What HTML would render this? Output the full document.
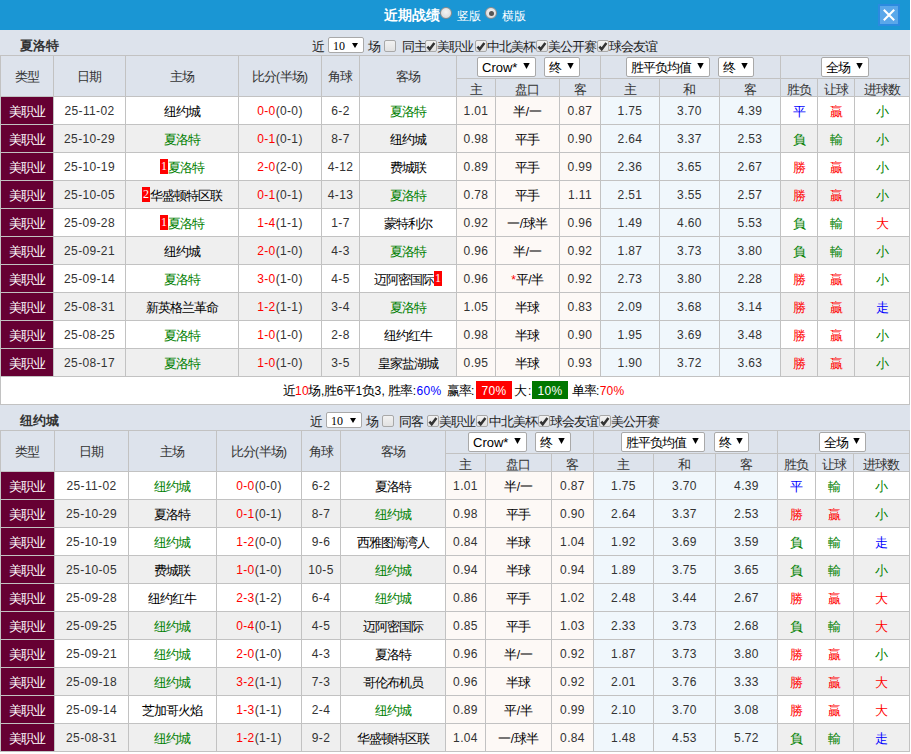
<!DOCTYPE html>
<html><head><meta charset="utf-8">
<style>
html,body{margin:0;padding:0;}
body{width:911px;height:754px;overflow:hidden;position:relative;background:#fff;font-family:"Liberation Sans",sans-serif;font-size:12px;color:#000;}
.c{font-size:13px;letter-spacing:-1px;position:relative;left:-0.5px;}
.tt .c,.hd .c{font-size:inherit;letter-spacing:0;}
.h{color:#333;}
div{position:absolute;box-sizing:border-box;}
.t{text-align:center;white-space:nowrap;color:#333;}
.r{letter-spacing:0.35px;}
.tt{font-weight:bold;font-size:13px;color:#333;line-height:15px;}
.ft{font-size:12px;line-height:16px;color:#222;white-space:nowrap;}
.cb{width:12px;height:12px;border:1px solid #a8a8a8;border-radius:2px;background:linear-gradient(#f2f2f2,#e2e2e2);}
.cb svg{position:absolute;left:0;top:0;}
.sel{background:#fff;border:1px solid #a9a9a9;border-radius:2px;font-size:13px;line-height:17px;}
.sel .sl{position:absolute;left:4px;top:1px;}
.sel .tri{position:absolute;right:5px;top:5px;}
.sel.sm{font-size:12px;line-height:13px;font-family:"Liberation Serif",serif;}
.sel.sm .sl{top:2px;left:4px;}
.sel.sm .tri{top:5px;right:5px;}
.bd{display:inline-block;background:#f00;color:#fff;width:8px;line-height:15px;text-align:center;font-size:12px;position:relative;top:-2px;font-family:"Liberation Serif",serif;letter-spacing:0;}
.bx{color:#fff;text-align:center;height:18px;line-height:20px;font-size:12px;letter-spacing:0.3px;}
.sm1{white-space:nowrap;line-height:18px;font-size:12px;}
#hd{left:0;top:0;width:910px;height:30px;background:#1a96d4;}
</style></head><body>
<div id="hd"></div>
<div class="hd" style="left:384px;top:6px;font-size:14px;font-weight:bold;color:#fff;line-height:18px;">近期战绩</div>
<div style="left:440px;top:7px;width:12px;height:12px;border-radius:50%;background:radial-gradient(circle at 50% 40%,#f4f4f4,#d4d4d4);border:1px solid #8c8c8c;"></div>
<div style="left:457px;top:8px;font-size:12px;color:#fff;line-height:16px;">竖版</div>
<div style="left:485px;top:7px;width:12px;height:12px;border-radius:50%;background:radial-gradient(circle at 50% 40%,#f4f4f4,#d4d4d4);border:1px solid #8c8c8c;"><div style="left:2.5px;top:2.5px;width:5px;height:5px;border-radius:50%;background:#555"></div></div>
<div style="left:502px;top:8px;font-size:12px;color:#fff;line-height:16px;">横版</div>
<div style="left:878px;top:4px;width:22px;height:22px;background:#2b8ae0;"></div>
<div style="left:880px;top:6px;width:18px;height:18px;background:#5aa7ea;"><svg width="18" height="18" viewBox="0 0 18 18"><path d="M3.8 3.8 L14.2 14.2 M14.2 3.8 L3.8 14.2" stroke="#fff" stroke-width="2.1"/></svg></div>
<div style="left:0px;top:30px;width:910px;height:25px;background:#dde3ec;"></div>
<div class="tt" style="left:20px;top:38px"><span class="c">夏洛特</span></div>
<div class="ft" style="left:312px;top:39px"><span class="c">近</span></div><div class="sel sm" style="left:328px;top:37px;width:36px;height:16px"><span class="sl">10</span><svg class="tri" width="6" height="5" viewBox="0 0 6 5"><path d="M0 0H6L3 5Z" fill="#000"/></svg></div><div class="ft" style="left:368px;top:39px"><span class="c">场</span></div><div class="cb" style="left:384px;top:40px"></div><div class="ft" style="left:402px;top:39px"><span class="c">同主</span></div><div class="cb" style="left:425px;top:40px"><svg width="11" height="11" viewBox="0 0 11 11"><path d="M1.4 5.6 L3.7 8.3 L8.4 1.9" stroke="#333" stroke-width="2.5" fill="none"/></svg></div><div class="ft" style="left:437px;top:39px"><span class="c">美职业</span></div><div class="cb" style="left:475px;top:40px"><svg width="11" height="11" viewBox="0 0 11 11"><path d="M1.4 5.6 L3.7 8.3 L8.4 1.9" stroke="#333" stroke-width="2.5" fill="none"/></svg></div><div class="ft" style="left:487px;top:39px"><span class="c">中北美杯</span></div><div class="cb" style="left:536px;top:40px"><svg width="11" height="11" viewBox="0 0 11 11"><path d="M1.4 5.6 L3.7 8.3 L8.4 1.9" stroke="#333" stroke-width="2.5" fill="none"/></svg></div><div class="ft" style="left:548px;top:39px"><span class="c">美公开赛</span></div><div class="cb" style="left:597px;top:40px"><svg width="11" height="11" viewBox="0 0 11 11"><path d="M1.4 5.6 L3.7 8.3 L8.4 1.9" stroke="#333" stroke-width="2.5" fill="none"/></svg></div><div class="ft" style="left:609px;top:39px"><span class="c">球会友谊</span></div>
<div style="left:0px;top:55px;width:910px;height:41px;background:#dde3ec;"></div>
<div style="left:1px;top:97px;width:908px;height:27px;background:#ffffff;"></div>
<div style="left:1px;top:97px;width:52px;height:27px;background:#660033;"></div>
<div style="left:457px;top:97px;width:38px;height:27px;background:#fdf9f6;"></div>
<div style="left:496px;top:97px;width:63px;height:27px;background:#fdf9f6;"></div>
<div style="left:560px;top:97px;width:40px;height:27px;background:#fdf9f6;"></div>
<div style="left:601px;top:97px;width:58px;height:27px;background:#f0f7fc;"></div>
<div style="left:660px;top:97px;width:59px;height:27px;background:#f0f7fc;"></div>
<div style="left:720px;top:97px;width:60px;height:27px;background:#f0f7fc;"></div>
<div style="left:1px;top:125px;width:908px;height:27px;background:#efefef;"></div>
<div style="left:1px;top:125px;width:52px;height:27px;background:#660033;"></div>
<div style="left:457px;top:125px;width:38px;height:27px;background:#fdf9f6;"></div>
<div style="left:496px;top:125px;width:63px;height:27px;background:#fdf9f6;"></div>
<div style="left:560px;top:125px;width:40px;height:27px;background:#fdf9f6;"></div>
<div style="left:601px;top:125px;width:58px;height:27px;background:#f0f7fc;"></div>
<div style="left:660px;top:125px;width:59px;height:27px;background:#f0f7fc;"></div>
<div style="left:720px;top:125px;width:60px;height:27px;background:#f0f7fc;"></div>
<div style="left:1px;top:153px;width:908px;height:27px;background:#ffffff;"></div>
<div style="left:1px;top:153px;width:52px;height:27px;background:#660033;"></div>
<div style="left:457px;top:153px;width:38px;height:27px;background:#fdf9f6;"></div>
<div style="left:496px;top:153px;width:63px;height:27px;background:#fdf9f6;"></div>
<div style="left:560px;top:153px;width:40px;height:27px;background:#fdf9f6;"></div>
<div style="left:601px;top:153px;width:58px;height:27px;background:#f0f7fc;"></div>
<div style="left:660px;top:153px;width:59px;height:27px;background:#f0f7fc;"></div>
<div style="left:720px;top:153px;width:60px;height:27px;background:#f0f7fc;"></div>
<div style="left:1px;top:181px;width:908px;height:27px;background:#efefef;"></div>
<div style="left:1px;top:181px;width:52px;height:27px;background:#660033;"></div>
<div style="left:457px;top:181px;width:38px;height:27px;background:#fdf9f6;"></div>
<div style="left:496px;top:181px;width:63px;height:27px;background:#fdf9f6;"></div>
<div style="left:560px;top:181px;width:40px;height:27px;background:#fdf9f6;"></div>
<div style="left:601px;top:181px;width:58px;height:27px;background:#f0f7fc;"></div>
<div style="left:660px;top:181px;width:59px;height:27px;background:#f0f7fc;"></div>
<div style="left:720px;top:181px;width:60px;height:27px;background:#f0f7fc;"></div>
<div style="left:1px;top:209px;width:908px;height:27px;background:#ffffff;"></div>
<div style="left:1px;top:209px;width:52px;height:27px;background:#660033;"></div>
<div style="left:457px;top:209px;width:38px;height:27px;background:#fdf9f6;"></div>
<div style="left:496px;top:209px;width:63px;height:27px;background:#fdf9f6;"></div>
<div style="left:560px;top:209px;width:40px;height:27px;background:#fdf9f6;"></div>
<div style="left:601px;top:209px;width:58px;height:27px;background:#f0f7fc;"></div>
<div style="left:660px;top:209px;width:59px;height:27px;background:#f0f7fc;"></div>
<div style="left:720px;top:209px;width:60px;height:27px;background:#f0f7fc;"></div>
<div style="left:1px;top:237px;width:908px;height:27px;background:#efefef;"></div>
<div style="left:1px;top:237px;width:52px;height:27px;background:#660033;"></div>
<div style="left:457px;top:237px;width:38px;height:27px;background:#fdf9f6;"></div>
<div style="left:496px;top:237px;width:63px;height:27px;background:#fdf9f6;"></div>
<div style="left:560px;top:237px;width:40px;height:27px;background:#fdf9f6;"></div>
<div style="left:601px;top:237px;width:58px;height:27px;background:#f0f7fc;"></div>
<div style="left:660px;top:237px;width:59px;height:27px;background:#f0f7fc;"></div>
<div style="left:720px;top:237px;width:60px;height:27px;background:#f0f7fc;"></div>
<div style="left:1px;top:265px;width:908px;height:27px;background:#ffffff;"></div>
<div style="left:1px;top:265px;width:52px;height:27px;background:#660033;"></div>
<div style="left:457px;top:265px;width:38px;height:27px;background:#fdf9f6;"></div>
<div style="left:496px;top:265px;width:63px;height:27px;background:#fdf9f6;"></div>
<div style="left:560px;top:265px;width:40px;height:27px;background:#fdf9f6;"></div>
<div style="left:601px;top:265px;width:58px;height:27px;background:#f0f7fc;"></div>
<div style="left:660px;top:265px;width:59px;height:27px;background:#f0f7fc;"></div>
<div style="left:720px;top:265px;width:60px;height:27px;background:#f0f7fc;"></div>
<div style="left:1px;top:293px;width:908px;height:27px;background:#efefef;"></div>
<div style="left:1px;top:293px;width:52px;height:27px;background:#660033;"></div>
<div style="left:457px;top:293px;width:38px;height:27px;background:#fdf9f6;"></div>
<div style="left:496px;top:293px;width:63px;height:27px;background:#fdf9f6;"></div>
<div style="left:560px;top:293px;width:40px;height:27px;background:#fdf9f6;"></div>
<div style="left:601px;top:293px;width:58px;height:27px;background:#f0f7fc;"></div>
<div style="left:660px;top:293px;width:59px;height:27px;background:#f0f7fc;"></div>
<div style="left:720px;top:293px;width:60px;height:27px;background:#f0f7fc;"></div>
<div style="left:1px;top:321px;width:908px;height:27px;background:#ffffff;"></div>
<div style="left:1px;top:321px;width:52px;height:27px;background:#660033;"></div>
<div style="left:457px;top:321px;width:38px;height:27px;background:#fdf9f6;"></div>
<div style="left:496px;top:321px;width:63px;height:27px;background:#fdf9f6;"></div>
<div style="left:560px;top:321px;width:40px;height:27px;background:#fdf9f6;"></div>
<div style="left:601px;top:321px;width:58px;height:27px;background:#f0f7fc;"></div>
<div style="left:660px;top:321px;width:59px;height:27px;background:#f0f7fc;"></div>
<div style="left:720px;top:321px;width:60px;height:27px;background:#f0f7fc;"></div>
<div style="left:1px;top:349px;width:908px;height:27px;background:#efefef;"></div>
<div style="left:1px;top:349px;width:52px;height:27px;background:#660033;"></div>
<div style="left:457px;top:349px;width:38px;height:27px;background:#fdf9f6;"></div>
<div style="left:496px;top:349px;width:63px;height:27px;background:#fdf9f6;"></div>
<div style="left:560px;top:349px;width:40px;height:27px;background:#fdf9f6;"></div>
<div style="left:601px;top:349px;width:58px;height:27px;background:#f0f7fc;"></div>
<div style="left:660px;top:349px;width:59px;height:27px;background:#f0f7fc;"></div>
<div style="left:720px;top:349px;width:60px;height:27px;background:#f0f7fc;"></div>
<div style="left:0px;top:55px;width:910px;height:1px;background:#c2c2c2;"></div>
<div style="left:456px;top:78px;width:453px;height:1px;background:#c2c2c2;"></div>
<div style="left:0px;top:96px;width:910px;height:1px;background:#c2c2c2;"></div>
<div style="left:0px;top:124px;width:910px;height:1px;background:#c2c2c2;"></div>
<div style="left:0px;top:152px;width:910px;height:1px;background:#c2c2c2;"></div>
<div style="left:0px;top:180px;width:910px;height:1px;background:#c2c2c2;"></div>
<div style="left:0px;top:208px;width:910px;height:1px;background:#c2c2c2;"></div>
<div style="left:0px;top:236px;width:910px;height:1px;background:#c2c2c2;"></div>
<div style="left:0px;top:264px;width:910px;height:1px;background:#c2c2c2;"></div>
<div style="left:0px;top:292px;width:910px;height:1px;background:#c2c2c2;"></div>
<div style="left:0px;top:320px;width:910px;height:1px;background:#c2c2c2;"></div>
<div style="left:0px;top:348px;width:910px;height:1px;background:#c2c2c2;"></div>
<div style="left:0px;top:376px;width:910px;height:1px;background:#c2c2c2;"></div>
<div style="left:0px;top:55px;width:1px;height:321px;background:#c2c2c2;"></div>
<div style="left:53px;top:55px;width:1px;height:321px;background:#c2c2c2;"></div>
<div style="left:125px;top:55px;width:1px;height:321px;background:#c2c2c2;"></div>
<div style="left:238px;top:55px;width:1px;height:321px;background:#c2c2c2;"></div>
<div style="left:321px;top:55px;width:1px;height:321px;background:#c2c2c2;"></div>
<div style="left:359px;top:55px;width:1px;height:321px;background:#c2c2c2;"></div>
<div style="left:456px;top:55px;width:1px;height:321px;background:#c2c2c2;"></div>
<div style="left:495px;top:78px;width:1px;height:298px;background:#c2c2c2;"></div>
<div style="left:559px;top:78px;width:1px;height:298px;background:#c2c2c2;"></div>
<div style="left:600px;top:55px;width:1px;height:321px;background:#c2c2c2;"></div>
<div style="left:659px;top:78px;width:1px;height:298px;background:#c2c2c2;"></div>
<div style="left:719px;top:78px;width:1px;height:298px;background:#c2c2c2;"></div>
<div style="left:780px;top:55px;width:1px;height:321px;background:#c2c2c2;"></div>
<div style="left:817px;top:78px;width:1px;height:298px;background:#c2c2c2;"></div>
<div style="left:854px;top:78px;width:1px;height:298px;background:#c2c2c2;"></div>
<div style="left:909px;top:55px;width:1px;height:321px;background:#c2c2c2;"></div>
<div class="t h" style="left:1px;top:57px;width:52px;height:40px;line-height:40px;"><span class="c">类型</span></div>
<div class="t h" style="left:54px;top:57px;width:71px;height:40px;line-height:40px;"><span class="c">日期</span></div>
<div class="t h" style="left:126px;top:57px;width:112px;height:40px;line-height:40px;"><span class="c">主场</span></div>
<div class="t h" style="left:239px;top:57px;width:82px;height:40px;line-height:40px;"><span class="c">比分</span>(<span class="c">半场</span>)</div>
<div class="t h" style="left:322px;top:57px;width:37px;height:40px;line-height:40px;"><span class="c">角球</span></div>
<div class="t h" style="left:360px;top:57px;width:96px;height:40px;line-height:40px;"><span class="c">客场</span></div>
<div class="t h" style="left:457px;top:81px;width:38px;height:17px;line-height:17px;"><span class="c">主</span></div>
<div class="t h" style="left:496px;top:81px;width:63px;height:17px;line-height:17px;"><span class="c">盘口</span></div>
<div class="t h" style="left:560px;top:81px;width:40px;height:17px;line-height:17px;"><span class="c">客</span></div>
<div class="t h" style="left:601px;top:81px;width:58px;height:17px;line-height:17px;"><span class="c">主</span></div>
<div class="t h" style="left:660px;top:81px;width:59px;height:17px;line-height:17px;"><span class="c">和</span></div>
<div class="t h" style="left:720px;top:81px;width:60px;height:17px;line-height:17px;"><span class="c">客</span></div>
<div class="t h" style="left:781px;top:81px;width:36px;height:17px;line-height:17px;"><span class="c">胜负</span></div>
<div class="t h" style="left:818px;top:81px;width:36px;height:17px;line-height:17px;"><span class="c">让球</span></div>
<div class="t h" style="left:855px;top:81px;width:54px;height:17px;line-height:17px;"><span class="c">进球数</span></div>
<div class="sel" style="left:477px;top:57px;width:59px;height:20px;"><span class="sl">Crow*</span><svg class="tri" width="7" height="6" viewBox="0 0 7 6"><path d="M0.3 0H6.7L3.5 6Z" fill="#000"/></svg></div>
<div class="sel" style="left:544px;top:57px;width:36px;height:20px;"><span class="sl"><span class="c">终</span></span><svg class="tri" width="7" height="6" viewBox="0 0 7 6"><path d="M0.3 0H6.7L3.5 6Z" fill="#000"/></svg></div>
<div class="sel" style="left:626px;top:57px;width:84px;height:20px;"><span class="sl"><span class="c">胜平负均值</span></span><svg class="tri" width="7" height="6" viewBox="0 0 7 6"><path d="M0.3 0H6.7L3.5 6Z" fill="#000"/></svg></div>
<div class="sel" style="left:718px;top:57px;width:36px;height:20px;"><span class="sl"><span class="c">终</span></span><svg class="tri" width="7" height="6" viewBox="0 0 7 6"><path d="M0.3 0H6.7L3.5 6Z" fill="#000"/></svg></div>
<div class="sel" style="left:821px;top:57px;width:48px;height:20px;"><span class="sl"><span class="c">全场</span></span><svg class="tri" width="7" height="6" viewBox="0 0 7 6"><path d="M0.3 0H6.7L3.5 6Z" fill="#000"/></svg></div>
<div class="t r" style="left:1px;top:98px;width:52px;height:27px;line-height:27px;color:#fff;"><span class="c">美职业</span></div>
<div class="t r" style="left:54px;top:98px;width:71px;height:27px;line-height:27px;">25-11-02</div>
<div class="t r" style="left:126px;top:98px;width:112px;height:27px;line-height:27px;"><span style="color:#000;"><span class="c">纽约城</span></span></div>
<div class="t r" style="left:239px;top:98px;width:82px;height:27px;line-height:27px;"><span style="color:#ff0000">0-0</span>(0-0)</div>
<div class="t r" style="left:322px;top:98px;width:37px;height:27px;line-height:27px;">6-2</div>
<div class="t r" style="left:360px;top:98px;width:96px;height:27px;line-height:27px;"><span style="color:#008000;"><span class="c">夏洛特</span></span></div>
<div class="t r" style="left:457px;top:98px;width:38px;height:27px;line-height:27px;">1.01</div>
<div class="t r" style="left:496px;top:98px;width:63px;height:27px;line-height:27px;"><span style="color:#000"><span class="c">半</span>/<span class="c">一</span></span></div>
<div class="t r" style="left:560px;top:98px;width:40px;height:27px;line-height:27px;">0.87</div>
<div class="t r" style="left:601px;top:98px;width:58px;height:27px;line-height:27px;">1.75</div>
<div class="t r" style="left:660px;top:98px;width:59px;height:27px;line-height:27px;">3.70</div>
<div class="t r" style="left:720px;top:98px;width:60px;height:27px;line-height:27px;">4.39</div>
<div class="t r" style="left:781px;top:98px;width:36px;height:27px;line-height:27px;"><span style="color:#0000ff"><span class="c">平</span></span></div>
<div class="t r" style="left:818px;top:98px;width:36px;height:27px;line-height:27px;"><span style="color:#ff0000"><span class="c">贏</span></span></div>
<div class="t r" style="left:855px;top:98px;width:54px;height:27px;line-height:27px;"><span style="color:#008000"><span class="c">小</span></span></div>
<div class="t r" style="left:1px;top:126px;width:52px;height:27px;line-height:27px;color:#fff;"><span class="c">美职业</span></div>
<div class="t r" style="left:54px;top:126px;width:71px;height:27px;line-height:27px;">25-10-29</div>
<div class="t r" style="left:126px;top:126px;width:112px;height:27px;line-height:27px;"><span style="color:#008000;"><span class="c">夏洛特</span></span></div>
<div class="t r" style="left:239px;top:126px;width:82px;height:27px;line-height:27px;"><span style="color:#ff0000">0-1</span>(0-1)</div>
<div class="t r" style="left:322px;top:126px;width:37px;height:27px;line-height:27px;">8-7</div>
<div class="t r" style="left:360px;top:126px;width:96px;height:27px;line-height:27px;"><span style="color:#000;"><span class="c">纽约城</span></span></div>
<div class="t r" style="left:457px;top:126px;width:38px;height:27px;line-height:27px;">0.98</div>
<div class="t r" style="left:496px;top:126px;width:63px;height:27px;line-height:27px;"><span style="color:#000"><span class="c">平手</span></span></div>
<div class="t r" style="left:560px;top:126px;width:40px;height:27px;line-height:27px;">0.90</div>
<div class="t r" style="left:601px;top:126px;width:58px;height:27px;line-height:27px;">2.64</div>
<div class="t r" style="left:660px;top:126px;width:59px;height:27px;line-height:27px;">3.37</div>
<div class="t r" style="left:720px;top:126px;width:60px;height:27px;line-height:27px;">2.53</div>
<div class="t r" style="left:781px;top:126px;width:36px;height:27px;line-height:27px;"><span style="color:#008000"><span class="c">負</span></span></div>
<div class="t r" style="left:818px;top:126px;width:36px;height:27px;line-height:27px;"><span style="color:#008000"><span class="c">輸</span></span></div>
<div class="t r" style="left:855px;top:126px;width:54px;height:27px;line-height:27px;"><span style="color:#008000"><span class="c">小</span></span></div>
<div class="t r" style="left:1px;top:154px;width:52px;height:27px;line-height:27px;color:#fff;"><span class="c">美职业</span></div>
<div class="t r" style="left:54px;top:154px;width:71px;height:27px;line-height:27px;">25-10-19</div>
<div class="t r" style="left:126px;top:154px;width:112px;height:27px;line-height:27px;"><span class="bd">1</span><span style="color:#008000;"><span class="c">夏洛特</span></span></div>
<div class="t r" style="left:239px;top:154px;width:82px;height:27px;line-height:27px;"><span style="color:#ff0000">2-0</span>(2-0)</div>
<div class="t r" style="left:322px;top:154px;width:37px;height:27px;line-height:27px;">4-12</div>
<div class="t r" style="left:360px;top:154px;width:96px;height:27px;line-height:27px;"><span style="color:#000;"><span class="c">费城联</span></span></div>
<div class="t r" style="left:457px;top:154px;width:38px;height:27px;line-height:27px;">0.89</div>
<div class="t r" style="left:496px;top:154px;width:63px;height:27px;line-height:27px;"><span style="color:#000"><span class="c">平手</span></span></div>
<div class="t r" style="left:560px;top:154px;width:40px;height:27px;line-height:27px;">0.99</div>
<div class="t r" style="left:601px;top:154px;width:58px;height:27px;line-height:27px;">2.36</div>
<div class="t r" style="left:660px;top:154px;width:59px;height:27px;line-height:27px;">3.65</div>
<div class="t r" style="left:720px;top:154px;width:60px;height:27px;line-height:27px;">2.67</div>
<div class="t r" style="left:781px;top:154px;width:36px;height:27px;line-height:27px;"><span style="color:#ff0000"><span class="c">勝</span></span></div>
<div class="t r" style="left:818px;top:154px;width:36px;height:27px;line-height:27px;"><span style="color:#ff0000"><span class="c">贏</span></span></div>
<div class="t r" style="left:855px;top:154px;width:54px;height:27px;line-height:27px;"><span style="color:#008000"><span class="c">小</span></span></div>
<div class="t r" style="left:1px;top:182px;width:52px;height:27px;line-height:27px;color:#fff;"><span class="c">美职业</span></div>
<div class="t r" style="left:54px;top:182px;width:71px;height:27px;line-height:27px;">25-10-05</div>
<div class="t r" style="left:126px;top:182px;width:112px;height:27px;line-height:27px;"><span class="bd">2</span><span style="color:#000;"><span class="c">华盛顿特区联</span></span></div>
<div class="t r" style="left:239px;top:182px;width:82px;height:27px;line-height:27px;"><span style="color:#ff0000">0-1</span>(0-1)</div>
<div class="t r" style="left:322px;top:182px;width:37px;height:27px;line-height:27px;">4-13</div>
<div class="t r" style="left:360px;top:182px;width:96px;height:27px;line-height:27px;"><span style="color:#008000;"><span class="c">夏洛特</span></span></div>
<div class="t r" style="left:457px;top:182px;width:38px;height:27px;line-height:27px;">0.78</div>
<div class="t r" style="left:496px;top:182px;width:63px;height:27px;line-height:27px;"><span style="color:#000"><span class="c">平手</span></span></div>
<div class="t r" style="left:560px;top:182px;width:40px;height:27px;line-height:27px;">1.11</div>
<div class="t r" style="left:601px;top:182px;width:58px;height:27px;line-height:27px;">2.51</div>
<div class="t r" style="left:660px;top:182px;width:59px;height:27px;line-height:27px;">3.55</div>
<div class="t r" style="left:720px;top:182px;width:60px;height:27px;line-height:27px;">2.57</div>
<div class="t r" style="left:781px;top:182px;width:36px;height:27px;line-height:27px;"><span style="color:#ff0000"><span class="c">勝</span></span></div>
<div class="t r" style="left:818px;top:182px;width:36px;height:27px;line-height:27px;"><span style="color:#ff0000"><span class="c">贏</span></span></div>
<div class="t r" style="left:855px;top:182px;width:54px;height:27px;line-height:27px;"><span style="color:#008000"><span class="c">小</span></span></div>
<div class="t r" style="left:1px;top:210px;width:52px;height:27px;line-height:27px;color:#fff;"><span class="c">美职业</span></div>
<div class="t r" style="left:54px;top:210px;width:71px;height:27px;line-height:27px;">25-09-28</div>
<div class="t r" style="left:126px;top:210px;width:112px;height:27px;line-height:27px;"><span class="bd">1</span><span style="color:#008000;"><span class="c">夏洛特</span></span></div>
<div class="t r" style="left:239px;top:210px;width:82px;height:27px;line-height:27px;"><span style="color:#ff0000">1-4</span>(1-1)</div>
<div class="t r" style="left:322px;top:210px;width:37px;height:27px;line-height:27px;">1-7</div>
<div class="t r" style="left:360px;top:210px;width:96px;height:27px;line-height:27px;"><span style="color:#000;"><span class="c">蒙特利尔</span></span></div>
<div class="t r" style="left:457px;top:210px;width:38px;height:27px;line-height:27px;">0.92</div>
<div class="t r" style="left:496px;top:210px;width:63px;height:27px;line-height:27px;"><span style="color:#000"><span class="c">一</span>/<span class="c">球半</span></span></div>
<div class="t r" style="left:560px;top:210px;width:40px;height:27px;line-height:27px;">0.96</div>
<div class="t r" style="left:601px;top:210px;width:58px;height:27px;line-height:27px;">1.49</div>
<div class="t r" style="left:660px;top:210px;width:59px;height:27px;line-height:27px;">4.60</div>
<div class="t r" style="left:720px;top:210px;width:60px;height:27px;line-height:27px;">5.53</div>
<div class="t r" style="left:781px;top:210px;width:36px;height:27px;line-height:27px;"><span style="color:#008000"><span class="c">負</span></span></div>
<div class="t r" style="left:818px;top:210px;width:36px;height:27px;line-height:27px;"><span style="color:#008000"><span class="c">輸</span></span></div>
<div class="t r" style="left:855px;top:210px;width:54px;height:27px;line-height:27px;"><span style="color:#ff0000"><span class="c">大</span></span></div>
<div class="t r" style="left:1px;top:238px;width:52px;height:27px;line-height:27px;color:#fff;"><span class="c">美职业</span></div>
<div class="t r" style="left:54px;top:238px;width:71px;height:27px;line-height:27px;">25-09-21</div>
<div class="t r" style="left:126px;top:238px;width:112px;height:27px;line-height:27px;"><span style="color:#000;"><span class="c">纽约城</span></span></div>
<div class="t r" style="left:239px;top:238px;width:82px;height:27px;line-height:27px;"><span style="color:#ff0000">2-0</span>(1-0)</div>
<div class="t r" style="left:322px;top:238px;width:37px;height:27px;line-height:27px;">4-3</div>
<div class="t r" style="left:360px;top:238px;width:96px;height:27px;line-height:27px;"><span style="color:#008000;"><span class="c">夏洛特</span></span></div>
<div class="t r" style="left:457px;top:238px;width:38px;height:27px;line-height:27px;">0.96</div>
<div class="t r" style="left:496px;top:238px;width:63px;height:27px;line-height:27px;"><span style="color:#000"><span class="c">半</span>/<span class="c">一</span></span></div>
<div class="t r" style="left:560px;top:238px;width:40px;height:27px;line-height:27px;">0.92</div>
<div class="t r" style="left:601px;top:238px;width:58px;height:27px;line-height:27px;">1.87</div>
<div class="t r" style="left:660px;top:238px;width:59px;height:27px;line-height:27px;">3.73</div>
<div class="t r" style="left:720px;top:238px;width:60px;height:27px;line-height:27px;">3.80</div>
<div class="t r" style="left:781px;top:238px;width:36px;height:27px;line-height:27px;"><span style="color:#008000"><span class="c">負</span></span></div>
<div class="t r" style="left:818px;top:238px;width:36px;height:27px;line-height:27px;"><span style="color:#008000"><span class="c">輸</span></span></div>
<div class="t r" style="left:855px;top:238px;width:54px;height:27px;line-height:27px;"><span style="color:#008000"><span class="c">小</span></span></div>
<div class="t r" style="left:1px;top:266px;width:52px;height:27px;line-height:27px;color:#fff;"><span class="c">美职业</span></div>
<div class="t r" style="left:54px;top:266px;width:71px;height:27px;line-height:27px;">25-09-14</div>
<div class="t r" style="left:126px;top:266px;width:112px;height:27px;line-height:27px;"><span style="color:#008000;"><span class="c">夏洛特</span></span></div>
<div class="t r" style="left:239px;top:266px;width:82px;height:27px;line-height:27px;"><span style="color:#ff0000">3-0</span>(1-0)</div>
<div class="t r" style="left:322px;top:266px;width:37px;height:27px;line-height:27px;">4-5</div>
<div class="t r" style="left:360px;top:266px;width:96px;height:27px;line-height:27px;"><span style="color:#000;"><span class="c">迈阿密国际</span></span><span class="bd">1</span></div>
<div class="t r" style="left:457px;top:266px;width:38px;height:27px;line-height:27px;">0.96</div>
<div class="t r" style="left:496px;top:266px;width:63px;height:27px;line-height:27px;"><span style="color:#000"><span style="color:#f00">*</span><span class="c">平</span>/<span class="c">半</span></span></div>
<div class="t r" style="left:560px;top:266px;width:40px;height:27px;line-height:27px;">0.92</div>
<div class="t r" style="left:601px;top:266px;width:58px;height:27px;line-height:27px;">2.73</div>
<div class="t r" style="left:660px;top:266px;width:59px;height:27px;line-height:27px;">3.80</div>
<div class="t r" style="left:720px;top:266px;width:60px;height:27px;line-height:27px;">2.28</div>
<div class="t r" style="left:781px;top:266px;width:36px;height:27px;line-height:27px;"><span style="color:#ff0000"><span class="c">勝</span></span></div>
<div class="t r" style="left:818px;top:266px;width:36px;height:27px;line-height:27px;"><span style="color:#ff0000"><span class="c">贏</span></span></div>
<div class="t r" style="left:855px;top:266px;width:54px;height:27px;line-height:27px;"><span style="color:#008000"><span class="c">小</span></span></div>
<div class="t r" style="left:1px;top:294px;width:52px;height:27px;line-height:27px;color:#fff;"><span class="c">美职业</span></div>
<div class="t r" style="left:54px;top:294px;width:71px;height:27px;line-height:27px;">25-08-31</div>
<div class="t r" style="left:126px;top:294px;width:112px;height:27px;line-height:27px;"><span style="color:#000;"><span class="c">新英格兰革命</span></span></div>
<div class="t r" style="left:239px;top:294px;width:82px;height:27px;line-height:27px;"><span style="color:#ff0000">1-2</span>(1-1)</div>
<div class="t r" style="left:322px;top:294px;width:37px;height:27px;line-height:27px;">3-4</div>
<div class="t r" style="left:360px;top:294px;width:96px;height:27px;line-height:27px;"><span style="color:#008000;"><span class="c">夏洛特</span></span></div>
<div class="t r" style="left:457px;top:294px;width:38px;height:27px;line-height:27px;">1.05</div>
<div class="t r" style="left:496px;top:294px;width:63px;height:27px;line-height:27px;"><span style="color:#000"><span class="c">半球</span></span></div>
<div class="t r" style="left:560px;top:294px;width:40px;height:27px;line-height:27px;">0.83</div>
<div class="t r" style="left:601px;top:294px;width:58px;height:27px;line-height:27px;">2.09</div>
<div class="t r" style="left:660px;top:294px;width:59px;height:27px;line-height:27px;">3.68</div>
<div class="t r" style="left:720px;top:294px;width:60px;height:27px;line-height:27px;">3.14</div>
<div class="t r" style="left:781px;top:294px;width:36px;height:27px;line-height:27px;"><span style="color:#ff0000"><span class="c">勝</span></span></div>
<div class="t r" style="left:818px;top:294px;width:36px;height:27px;line-height:27px;"><span style="color:#ff0000"><span class="c">贏</span></span></div>
<div class="t r" style="left:855px;top:294px;width:54px;height:27px;line-height:27px;"><span style="color:#0000ff"><span class="c">走</span></span></div>
<div class="t r" style="left:1px;top:322px;width:52px;height:27px;line-height:27px;color:#fff;"><span class="c">美职业</span></div>
<div class="t r" style="left:54px;top:322px;width:71px;height:27px;line-height:27px;">25-08-25</div>
<div class="t r" style="left:126px;top:322px;width:112px;height:27px;line-height:27px;"><span style="color:#008000;"><span class="c">夏洛特</span></span></div>
<div class="t r" style="left:239px;top:322px;width:82px;height:27px;line-height:27px;"><span style="color:#ff0000">1-0</span>(1-0)</div>
<div class="t r" style="left:322px;top:322px;width:37px;height:27px;line-height:27px;">2-8</div>
<div class="t r" style="left:360px;top:322px;width:96px;height:27px;line-height:27px;"><span style="color:#000;"><span class="c">纽约红牛</span></span></div>
<div class="t r" style="left:457px;top:322px;width:38px;height:27px;line-height:27px;">0.98</div>
<div class="t r" style="left:496px;top:322px;width:63px;height:27px;line-height:27px;"><span style="color:#000"><span class="c">半球</span></span></div>
<div class="t r" style="left:560px;top:322px;width:40px;height:27px;line-height:27px;">0.90</div>
<div class="t r" style="left:601px;top:322px;width:58px;height:27px;line-height:27px;">1.95</div>
<div class="t r" style="left:660px;top:322px;width:59px;height:27px;line-height:27px;">3.69</div>
<div class="t r" style="left:720px;top:322px;width:60px;height:27px;line-height:27px;">3.48</div>
<div class="t r" style="left:781px;top:322px;width:36px;height:27px;line-height:27px;"><span style="color:#ff0000"><span class="c">勝</span></span></div>
<div class="t r" style="left:818px;top:322px;width:36px;height:27px;line-height:27px;"><span style="color:#ff0000"><span class="c">贏</span></span></div>
<div class="t r" style="left:855px;top:322px;width:54px;height:27px;line-height:27px;"><span style="color:#008000"><span class="c">小</span></span></div>
<div class="t r" style="left:1px;top:350px;width:52px;height:27px;line-height:27px;color:#fff;"><span class="c">美职业</span></div>
<div class="t r" style="left:54px;top:350px;width:71px;height:27px;line-height:27px;">25-08-17</div>
<div class="t r" style="left:126px;top:350px;width:112px;height:27px;line-height:27px;"><span style="color:#008000;"><span class="c">夏洛特</span></span></div>
<div class="t r" style="left:239px;top:350px;width:82px;height:27px;line-height:27px;"><span style="color:#ff0000">1-0</span>(1-0)</div>
<div class="t r" style="left:322px;top:350px;width:37px;height:27px;line-height:27px;">3-5</div>
<div class="t r" style="left:360px;top:350px;width:96px;height:27px;line-height:27px;"><span style="color:#000;"><span class="c">皇家盐湖城</span></span></div>
<div class="t r" style="left:457px;top:350px;width:38px;height:27px;line-height:27px;">0.95</div>
<div class="t r" style="left:496px;top:350px;width:63px;height:27px;line-height:27px;"><span style="color:#000"><span class="c">半球</span></span></div>
<div class="t r" style="left:560px;top:350px;width:40px;height:27px;line-height:27px;">0.93</div>
<div class="t r" style="left:601px;top:350px;width:58px;height:27px;line-height:27px;">1.90</div>
<div class="t r" style="left:660px;top:350px;width:59px;height:27px;line-height:27px;">3.72</div>
<div class="t r" style="left:720px;top:350px;width:60px;height:27px;line-height:27px;">3.63</div>
<div class="t r" style="left:781px;top:350px;width:36px;height:27px;line-height:27px;"><span style="color:#ff0000"><span class="c">勝</span></span></div>
<div class="t r" style="left:818px;top:350px;width:36px;height:27px;line-height:27px;"><span style="color:#ff0000"><span class="c">贏</span></span></div>
<div class="t r" style="left:855px;top:350px;width:54px;height:27px;line-height:27px;"><span style="color:#008000"><span class="c">小</span></span></div>
<div style="left:1px;top:377px;width:908px;height:27px;background:#ffffff;"></div>
<div style="left:0px;top:376px;width:1px;height:28px;background:#c2c2c2;"></div>
<div style="left:909px;top:376px;width:1px;height:28px;background:#c2c2c2;"></div>
<div style="left:0px;top:404px;width:910px;height:1px;background:#c2c2c2;"></div>
<div class="sm1" style="left:283px;top:382px;letter-spacing:0.3px"><span class="c">近</span><span style="color:#f00">10</span><span class="c">场</span>,<span class="c">胜</span>6<span class="c">平</span>1<span class="c">负</span>3, <span class="c">胜率</span>:<span style="color:#00f">60%</span></div><div class="sm1" style="left:447px;top:382px"><span class="c">赢率</span>:</div><div class="bx" style="left:476px;top:381px;width:36px;background:#f00">70%</div><div class="sm1" style="left:514px;top:382px"><span class="c">大</span><span style="margin-left:2px">:</span></div><div class="bx" style="left:532px;top:381px;width:36px;background:#007700">10%</div><div class="sm1" style="left:572px;top:382px;letter-spacing:0.3px"><span class="c">单率</span>:<span style="color:#f00">70%</span></div>
<div style="left:0px;top:405px;width:910px;height:25px;background:#dde3ec;"></div>
<div class="tt" style="left:20px;top:413px"><span class="c">纽约城</span></div>
<div class="ft" style="left:310px;top:414px"><span class="c">近</span></div><div class="sel sm" style="left:326px;top:412px;width:36px;height:16px"><span class="sl">10</span><svg class="tri" width="6" height="5" viewBox="0 0 6 5"><path d="M0 0H6L3 5Z" fill="#000"/></svg></div><div class="ft" style="left:366px;top:414px"><span class="c">场</span></div><div class="cb" style="left:382px;top:415px"></div><div class="ft" style="left:399px;top:414px"><span class="c">同客</span></div><div class="cb" style="left:427px;top:415px"><svg width="11" height="11" viewBox="0 0 11 11"><path d="M1.4 5.6 L3.7 8.3 L8.4 1.9" stroke="#333" stroke-width="2.5" fill="none"/></svg></div><div class="ft" style="left:439px;top:414px"><span class="c">美职业</span></div><div class="cb" style="left:476px;top:415px"><svg width="11" height="11" viewBox="0 0 11 11"><path d="M1.4 5.6 L3.7 8.3 L8.4 1.9" stroke="#333" stroke-width="2.5" fill="none"/></svg></div><div class="ft" style="left:489px;top:414px"><span class="c">中北美杯</span></div><div class="cb" style="left:538px;top:415px"><svg width="11" height="11" viewBox="0 0 11 11"><path d="M1.4 5.6 L3.7 8.3 L8.4 1.9" stroke="#333" stroke-width="2.5" fill="none"/></svg></div><div class="ft" style="left:550px;top:414px"><span class="c">球会友谊</span></div><div class="cb" style="left:599px;top:415px"><svg width="11" height="11" viewBox="0 0 11 11"><path d="M1.4 5.6 L3.7 8.3 L8.4 1.9" stroke="#333" stroke-width="2.5" fill="none"/></svg></div><div class="ft" style="left:611px;top:414px"><span class="c">美公开赛</span></div>
<div style="left:0px;top:430px;width:910px;height:41px;background:#dde3ec;"></div>
<div style="left:1px;top:472px;width:908px;height:27px;background:#ffffff;"></div>
<div style="left:1px;top:472px;width:53px;height:27px;background:#660033;"></div>
<div style="left:446px;top:472px;width:39px;height:27px;background:#fdf9f6;"></div>
<div style="left:486px;top:472px;width:65px;height:27px;background:#fdf9f6;"></div>
<div style="left:552px;top:472px;width:41px;height:27px;background:#fdf9f6;"></div>
<div style="left:594px;top:472px;width:59px;height:27px;background:#f0f7fc;"></div>
<div style="left:654px;top:472px;width:61px;height:27px;background:#f0f7fc;"></div>
<div style="left:716px;top:472px;width:61px;height:27px;background:#f0f7fc;"></div>
<div style="left:1px;top:500px;width:908px;height:27px;background:#efefef;"></div>
<div style="left:1px;top:500px;width:53px;height:27px;background:#660033;"></div>
<div style="left:446px;top:500px;width:39px;height:27px;background:#fdf9f6;"></div>
<div style="left:486px;top:500px;width:65px;height:27px;background:#fdf9f6;"></div>
<div style="left:552px;top:500px;width:41px;height:27px;background:#fdf9f6;"></div>
<div style="left:594px;top:500px;width:59px;height:27px;background:#f0f7fc;"></div>
<div style="left:654px;top:500px;width:61px;height:27px;background:#f0f7fc;"></div>
<div style="left:716px;top:500px;width:61px;height:27px;background:#f0f7fc;"></div>
<div style="left:1px;top:528px;width:908px;height:27px;background:#ffffff;"></div>
<div style="left:1px;top:528px;width:53px;height:27px;background:#660033;"></div>
<div style="left:446px;top:528px;width:39px;height:27px;background:#fdf9f6;"></div>
<div style="left:486px;top:528px;width:65px;height:27px;background:#fdf9f6;"></div>
<div style="left:552px;top:528px;width:41px;height:27px;background:#fdf9f6;"></div>
<div style="left:594px;top:528px;width:59px;height:27px;background:#f0f7fc;"></div>
<div style="left:654px;top:528px;width:61px;height:27px;background:#f0f7fc;"></div>
<div style="left:716px;top:528px;width:61px;height:27px;background:#f0f7fc;"></div>
<div style="left:1px;top:556px;width:908px;height:27px;background:#efefef;"></div>
<div style="left:1px;top:556px;width:53px;height:27px;background:#660033;"></div>
<div style="left:446px;top:556px;width:39px;height:27px;background:#fdf9f6;"></div>
<div style="left:486px;top:556px;width:65px;height:27px;background:#fdf9f6;"></div>
<div style="left:552px;top:556px;width:41px;height:27px;background:#fdf9f6;"></div>
<div style="left:594px;top:556px;width:59px;height:27px;background:#f0f7fc;"></div>
<div style="left:654px;top:556px;width:61px;height:27px;background:#f0f7fc;"></div>
<div style="left:716px;top:556px;width:61px;height:27px;background:#f0f7fc;"></div>
<div style="left:1px;top:584px;width:908px;height:27px;background:#ffffff;"></div>
<div style="left:1px;top:584px;width:53px;height:27px;background:#660033;"></div>
<div style="left:446px;top:584px;width:39px;height:27px;background:#fdf9f6;"></div>
<div style="left:486px;top:584px;width:65px;height:27px;background:#fdf9f6;"></div>
<div style="left:552px;top:584px;width:41px;height:27px;background:#fdf9f6;"></div>
<div style="left:594px;top:584px;width:59px;height:27px;background:#f0f7fc;"></div>
<div style="left:654px;top:584px;width:61px;height:27px;background:#f0f7fc;"></div>
<div style="left:716px;top:584px;width:61px;height:27px;background:#f0f7fc;"></div>
<div style="left:1px;top:612px;width:908px;height:27px;background:#efefef;"></div>
<div style="left:1px;top:612px;width:53px;height:27px;background:#660033;"></div>
<div style="left:446px;top:612px;width:39px;height:27px;background:#fdf9f6;"></div>
<div style="left:486px;top:612px;width:65px;height:27px;background:#fdf9f6;"></div>
<div style="left:552px;top:612px;width:41px;height:27px;background:#fdf9f6;"></div>
<div style="left:594px;top:612px;width:59px;height:27px;background:#f0f7fc;"></div>
<div style="left:654px;top:612px;width:61px;height:27px;background:#f0f7fc;"></div>
<div style="left:716px;top:612px;width:61px;height:27px;background:#f0f7fc;"></div>
<div style="left:1px;top:640px;width:908px;height:27px;background:#ffffff;"></div>
<div style="left:1px;top:640px;width:53px;height:27px;background:#660033;"></div>
<div style="left:446px;top:640px;width:39px;height:27px;background:#fdf9f6;"></div>
<div style="left:486px;top:640px;width:65px;height:27px;background:#fdf9f6;"></div>
<div style="left:552px;top:640px;width:41px;height:27px;background:#fdf9f6;"></div>
<div style="left:594px;top:640px;width:59px;height:27px;background:#f0f7fc;"></div>
<div style="left:654px;top:640px;width:61px;height:27px;background:#f0f7fc;"></div>
<div style="left:716px;top:640px;width:61px;height:27px;background:#f0f7fc;"></div>
<div style="left:1px;top:668px;width:908px;height:27px;background:#efefef;"></div>
<div style="left:1px;top:668px;width:53px;height:27px;background:#660033;"></div>
<div style="left:446px;top:668px;width:39px;height:27px;background:#fdf9f6;"></div>
<div style="left:486px;top:668px;width:65px;height:27px;background:#fdf9f6;"></div>
<div style="left:552px;top:668px;width:41px;height:27px;background:#fdf9f6;"></div>
<div style="left:594px;top:668px;width:59px;height:27px;background:#f0f7fc;"></div>
<div style="left:654px;top:668px;width:61px;height:27px;background:#f0f7fc;"></div>
<div style="left:716px;top:668px;width:61px;height:27px;background:#f0f7fc;"></div>
<div style="left:1px;top:696px;width:908px;height:27px;background:#ffffff;"></div>
<div style="left:1px;top:696px;width:53px;height:27px;background:#660033;"></div>
<div style="left:446px;top:696px;width:39px;height:27px;background:#fdf9f6;"></div>
<div style="left:486px;top:696px;width:65px;height:27px;background:#fdf9f6;"></div>
<div style="left:552px;top:696px;width:41px;height:27px;background:#fdf9f6;"></div>
<div style="left:594px;top:696px;width:59px;height:27px;background:#f0f7fc;"></div>
<div style="left:654px;top:696px;width:61px;height:27px;background:#f0f7fc;"></div>
<div style="left:716px;top:696px;width:61px;height:27px;background:#f0f7fc;"></div>
<div style="left:1px;top:724px;width:908px;height:27px;background:#efefef;"></div>
<div style="left:1px;top:724px;width:53px;height:27px;background:#660033;"></div>
<div style="left:446px;top:724px;width:39px;height:27px;background:#fdf9f6;"></div>
<div style="left:486px;top:724px;width:65px;height:27px;background:#fdf9f6;"></div>
<div style="left:552px;top:724px;width:41px;height:27px;background:#fdf9f6;"></div>
<div style="left:594px;top:724px;width:59px;height:27px;background:#f0f7fc;"></div>
<div style="left:654px;top:724px;width:61px;height:27px;background:#f0f7fc;"></div>
<div style="left:716px;top:724px;width:61px;height:27px;background:#f0f7fc;"></div>
<div style="left:0px;top:430px;width:910px;height:1px;background:#c2c2c2;"></div>
<div style="left:445px;top:453px;width:464px;height:1px;background:#c2c2c2;"></div>
<div style="left:0px;top:471px;width:910px;height:1px;background:#c2c2c2;"></div>
<div style="left:0px;top:499px;width:910px;height:1px;background:#c2c2c2;"></div>
<div style="left:0px;top:527px;width:910px;height:1px;background:#c2c2c2;"></div>
<div style="left:0px;top:555px;width:910px;height:1px;background:#c2c2c2;"></div>
<div style="left:0px;top:583px;width:910px;height:1px;background:#c2c2c2;"></div>
<div style="left:0px;top:611px;width:910px;height:1px;background:#c2c2c2;"></div>
<div style="left:0px;top:639px;width:910px;height:1px;background:#c2c2c2;"></div>
<div style="left:0px;top:667px;width:910px;height:1px;background:#c2c2c2;"></div>
<div style="left:0px;top:695px;width:910px;height:1px;background:#c2c2c2;"></div>
<div style="left:0px;top:723px;width:910px;height:1px;background:#c2c2c2;"></div>
<div style="left:0px;top:751px;width:910px;height:1px;background:#c2c2c2;"></div>
<div style="left:0px;top:430px;width:1px;height:321px;background:#c2c2c2;"></div>
<div style="left:54px;top:430px;width:1px;height:321px;background:#c2c2c2;"></div>
<div style="left:128px;top:430px;width:1px;height:321px;background:#c2c2c2;"></div>
<div style="left:216px;top:430px;width:1px;height:321px;background:#c2c2c2;"></div>
<div style="left:301px;top:430px;width:1px;height:321px;background:#c2c2c2;"></div>
<div style="left:340px;top:430px;width:1px;height:321px;background:#c2c2c2;"></div>
<div style="left:445px;top:430px;width:1px;height:321px;background:#c2c2c2;"></div>
<div style="left:485px;top:453px;width:1px;height:298px;background:#c2c2c2;"></div>
<div style="left:551px;top:453px;width:1px;height:298px;background:#c2c2c2;"></div>
<div style="left:593px;top:430px;width:1px;height:321px;background:#c2c2c2;"></div>
<div style="left:653px;top:453px;width:1px;height:298px;background:#c2c2c2;"></div>
<div style="left:715px;top:453px;width:1px;height:298px;background:#c2c2c2;"></div>
<div style="left:777px;top:430px;width:1px;height:321px;background:#c2c2c2;"></div>
<div style="left:815px;top:453px;width:1px;height:298px;background:#c2c2c2;"></div>
<div style="left:853px;top:453px;width:1px;height:298px;background:#c2c2c2;"></div>
<div style="left:909px;top:430px;width:1px;height:321px;background:#c2c2c2;"></div>
<div class="t h" style="left:1px;top:432px;width:53px;height:40px;line-height:40px;"><span class="c">类型</span></div>
<div class="t h" style="left:55px;top:432px;width:73px;height:40px;line-height:40px;"><span class="c">日期</span></div>
<div class="t h" style="left:129px;top:432px;width:87px;height:40px;line-height:40px;"><span class="c">主场</span></div>
<div class="t h" style="left:217px;top:432px;width:84px;height:40px;line-height:40px;"><span class="c">比分</span>(<span class="c">半场</span>)</div>
<div class="t h" style="left:302px;top:432px;width:38px;height:40px;line-height:40px;"><span class="c">角球</span></div>
<div class="t h" style="left:341px;top:432px;width:104px;height:40px;line-height:40px;"><span class="c">客场</span></div>
<div class="t h" style="left:446px;top:456px;width:39px;height:17px;line-height:17px;"><span class="c">主</span></div>
<div class="t h" style="left:486px;top:456px;width:65px;height:17px;line-height:17px;"><span class="c">盘口</span></div>
<div class="t h" style="left:552px;top:456px;width:41px;height:17px;line-height:17px;"><span class="c">客</span></div>
<div class="t h" style="left:594px;top:456px;width:59px;height:17px;line-height:17px;"><span class="c">主</span></div>
<div class="t h" style="left:654px;top:456px;width:61px;height:17px;line-height:17px;"><span class="c">和</span></div>
<div class="t h" style="left:716px;top:456px;width:61px;height:17px;line-height:17px;"><span class="c">客</span></div>
<div class="t h" style="left:778px;top:456px;width:37px;height:17px;line-height:17px;"><span class="c">胜负</span></div>
<div class="t h" style="left:816px;top:456px;width:37px;height:17px;line-height:17px;"><span class="c">让球</span></div>
<div class="t h" style="left:854px;top:456px;width:55px;height:17px;line-height:17px;"><span class="c">进球数</span></div>
<div class="sel" style="left:468px;top:432px;width:59px;height:20px;"><span class="sl">Crow*</span><svg class="tri" width="7" height="6" viewBox="0 0 7 6"><path d="M0.3 0H6.7L3.5 6Z" fill="#000"/></svg></div>
<div class="sel" style="left:535px;top:432px;width:36px;height:20px;"><span class="sl"><span class="c">终</span></span><svg class="tri" width="7" height="6" viewBox="0 0 7 6"><path d="M0.3 0H6.7L3.5 6Z" fill="#000"/></svg></div>
<div class="sel" style="left:621px;top:432px;width:84px;height:20px;"><span class="sl"><span class="c">胜平负均值</span></span><svg class="tri" width="7" height="6" viewBox="0 0 7 6"><path d="M0.3 0H6.7L3.5 6Z" fill="#000"/></svg></div>
<div class="sel" style="left:714px;top:432px;width:35px;height:20px;"><span class="sl"><span class="c">终</span></span><svg class="tri" width="7" height="6" viewBox="0 0 7 6"><path d="M0.3 0H6.7L3.5 6Z" fill="#000"/></svg></div>
<div class="sel" style="left:819px;top:432px;width:47px;height:20px;"><span class="sl"><span class="c">全场</span></span><svg class="tri" width="7" height="6" viewBox="0 0 7 6"><path d="M0.3 0H6.7L3.5 6Z" fill="#000"/></svg></div>
<div class="t r" style="left:1px;top:473px;width:53px;height:27px;line-height:27px;color:#fff;"><span class="c">美职业</span></div>
<div class="t r" style="left:55px;top:473px;width:73px;height:27px;line-height:27px;">25-11-02</div>
<div class="t r" style="left:129px;top:473px;width:87px;height:27px;line-height:27px;"><span style="color:#008000;"><span class="c">纽约城</span></span></div>
<div class="t r" style="left:217px;top:473px;width:84px;height:27px;line-height:27px;"><span style="color:#ff0000">0-0</span>(0-0)</div>
<div class="t r" style="left:302px;top:473px;width:38px;height:27px;line-height:27px;">6-2</div>
<div class="t r" style="left:341px;top:473px;width:104px;height:27px;line-height:27px;"><span style="color:#000;"><span class="c">夏洛特</span></span></div>
<div class="t r" style="left:446px;top:473px;width:39px;height:27px;line-height:27px;">1.01</div>
<div class="t r" style="left:486px;top:473px;width:65px;height:27px;line-height:27px;"><span style="color:#000"><span class="c">半</span>/<span class="c">一</span></span></div>
<div class="t r" style="left:552px;top:473px;width:41px;height:27px;line-height:27px;">0.87</div>
<div class="t r" style="left:594px;top:473px;width:59px;height:27px;line-height:27px;">1.75</div>
<div class="t r" style="left:654px;top:473px;width:61px;height:27px;line-height:27px;">3.70</div>
<div class="t r" style="left:716px;top:473px;width:61px;height:27px;line-height:27px;">4.39</div>
<div class="t r" style="left:778px;top:473px;width:37px;height:27px;line-height:27px;"><span style="color:#0000ff"><span class="c">平</span></span></div>
<div class="t r" style="left:816px;top:473px;width:37px;height:27px;line-height:27px;"><span style="color:#008000"><span class="c">輸</span></span></div>
<div class="t r" style="left:854px;top:473px;width:55px;height:27px;line-height:27px;"><span style="color:#008000"><span class="c">小</span></span></div>
<div class="t r" style="left:1px;top:501px;width:53px;height:27px;line-height:27px;color:#fff;"><span class="c">美职业</span></div>
<div class="t r" style="left:55px;top:501px;width:73px;height:27px;line-height:27px;">25-10-29</div>
<div class="t r" style="left:129px;top:501px;width:87px;height:27px;line-height:27px;"><span style="color:#000;"><span class="c">夏洛特</span></span></div>
<div class="t r" style="left:217px;top:501px;width:84px;height:27px;line-height:27px;"><span style="color:#ff0000">0-1</span>(0-1)</div>
<div class="t r" style="left:302px;top:501px;width:38px;height:27px;line-height:27px;">8-7</div>
<div class="t r" style="left:341px;top:501px;width:104px;height:27px;line-height:27px;"><span style="color:#008000;"><span class="c">纽约城</span></span></div>
<div class="t r" style="left:446px;top:501px;width:39px;height:27px;line-height:27px;">0.98</div>
<div class="t r" style="left:486px;top:501px;width:65px;height:27px;line-height:27px;"><span style="color:#000"><span class="c">平手</span></span></div>
<div class="t r" style="left:552px;top:501px;width:41px;height:27px;line-height:27px;">0.90</div>
<div class="t r" style="left:594px;top:501px;width:59px;height:27px;line-height:27px;">2.64</div>
<div class="t r" style="left:654px;top:501px;width:61px;height:27px;line-height:27px;">3.37</div>
<div class="t r" style="left:716px;top:501px;width:61px;height:27px;line-height:27px;">2.53</div>
<div class="t r" style="left:778px;top:501px;width:37px;height:27px;line-height:27px;"><span style="color:#ff0000"><span class="c">勝</span></span></div>
<div class="t r" style="left:816px;top:501px;width:37px;height:27px;line-height:27px;"><span style="color:#ff0000"><span class="c">贏</span></span></div>
<div class="t r" style="left:854px;top:501px;width:55px;height:27px;line-height:27px;"><span style="color:#008000"><span class="c">小</span></span></div>
<div class="t r" style="left:1px;top:529px;width:53px;height:27px;line-height:27px;color:#fff;"><span class="c">美职业</span></div>
<div class="t r" style="left:55px;top:529px;width:73px;height:27px;line-height:27px;">25-10-19</div>
<div class="t r" style="left:129px;top:529px;width:87px;height:27px;line-height:27px;"><span style="color:#008000;"><span class="c">纽约城</span></span></div>
<div class="t r" style="left:217px;top:529px;width:84px;height:27px;line-height:27px;"><span style="color:#ff0000">1-2</span>(0-0)</div>
<div class="t r" style="left:302px;top:529px;width:38px;height:27px;line-height:27px;">9-6</div>
<div class="t r" style="left:341px;top:529px;width:104px;height:27px;line-height:27px;"><span style="color:#000;"><span class="c">西雅图海湾人</span></span></div>
<div class="t r" style="left:446px;top:529px;width:39px;height:27px;line-height:27px;">0.84</div>
<div class="t r" style="left:486px;top:529px;width:65px;height:27px;line-height:27px;"><span style="color:#000"><span class="c">半球</span></span></div>
<div class="t r" style="left:552px;top:529px;width:41px;height:27px;line-height:27px;">1.04</div>
<div class="t r" style="left:594px;top:529px;width:59px;height:27px;line-height:27px;">1.92</div>
<div class="t r" style="left:654px;top:529px;width:61px;height:27px;line-height:27px;">3.69</div>
<div class="t r" style="left:716px;top:529px;width:61px;height:27px;line-height:27px;">3.59</div>
<div class="t r" style="left:778px;top:529px;width:37px;height:27px;line-height:27px;"><span style="color:#008000"><span class="c">負</span></span></div>
<div class="t r" style="left:816px;top:529px;width:37px;height:27px;line-height:27px;"><span style="color:#008000"><span class="c">輸</span></span></div>
<div class="t r" style="left:854px;top:529px;width:55px;height:27px;line-height:27px;"><span style="color:#0000ff"><span class="c">走</span></span></div>
<div class="t r" style="left:1px;top:557px;width:53px;height:27px;line-height:27px;color:#fff;"><span class="c">美职业</span></div>
<div class="t r" style="left:55px;top:557px;width:73px;height:27px;line-height:27px;">25-10-05</div>
<div class="t r" style="left:129px;top:557px;width:87px;height:27px;line-height:27px;"><span style="color:#000;"><span class="c">费城联</span></span></div>
<div class="t r" style="left:217px;top:557px;width:84px;height:27px;line-height:27px;"><span style="color:#ff0000">1-0</span>(1-0)</div>
<div class="t r" style="left:302px;top:557px;width:38px;height:27px;line-height:27px;">10-5</div>
<div class="t r" style="left:341px;top:557px;width:104px;height:27px;line-height:27px;"><span style="color:#008000;"><span class="c">纽约城</span></span></div>
<div class="t r" style="left:446px;top:557px;width:39px;height:27px;line-height:27px;">0.94</div>
<div class="t r" style="left:486px;top:557px;width:65px;height:27px;line-height:27px;"><span style="color:#000"><span class="c">半球</span></span></div>
<div class="t r" style="left:552px;top:557px;width:41px;height:27px;line-height:27px;">0.94</div>
<div class="t r" style="left:594px;top:557px;width:59px;height:27px;line-height:27px;">1.89</div>
<div class="t r" style="left:654px;top:557px;width:61px;height:27px;line-height:27px;">3.75</div>
<div class="t r" style="left:716px;top:557px;width:61px;height:27px;line-height:27px;">3.65</div>
<div class="t r" style="left:778px;top:557px;width:37px;height:27px;line-height:27px;"><span style="color:#008000"><span class="c">負</span></span></div>
<div class="t r" style="left:816px;top:557px;width:37px;height:27px;line-height:27px;"><span style="color:#008000"><span class="c">輸</span></span></div>
<div class="t r" style="left:854px;top:557px;width:55px;height:27px;line-height:27px;"><span style="color:#008000"><span class="c">小</span></span></div>
<div class="t r" style="left:1px;top:585px;width:53px;height:27px;line-height:27px;color:#fff;"><span class="c">美职业</span></div>
<div class="t r" style="left:55px;top:585px;width:73px;height:27px;line-height:27px;">25-09-28</div>
<div class="t r" style="left:129px;top:585px;width:87px;height:27px;line-height:27px;"><span style="color:#000;"><span class="c">纽约红牛</span></span></div>
<div class="t r" style="left:217px;top:585px;width:84px;height:27px;line-height:27px;"><span style="color:#ff0000">2-3</span>(1-2)</div>
<div class="t r" style="left:302px;top:585px;width:38px;height:27px;line-height:27px;">6-4</div>
<div class="t r" style="left:341px;top:585px;width:104px;height:27px;line-height:27px;"><span style="color:#008000;"><span class="c">纽约城</span></span></div>
<div class="t r" style="left:446px;top:585px;width:39px;height:27px;line-height:27px;">0.86</div>
<div class="t r" style="left:486px;top:585px;width:65px;height:27px;line-height:27px;"><span style="color:#000"><span class="c">平手</span></span></div>
<div class="t r" style="left:552px;top:585px;width:41px;height:27px;line-height:27px;">1.02</div>
<div class="t r" style="left:594px;top:585px;width:59px;height:27px;line-height:27px;">2.48</div>
<div class="t r" style="left:654px;top:585px;width:61px;height:27px;line-height:27px;">3.44</div>
<div class="t r" style="left:716px;top:585px;width:61px;height:27px;line-height:27px;">2.67</div>
<div class="t r" style="left:778px;top:585px;width:37px;height:27px;line-height:27px;"><span style="color:#ff0000"><span class="c">勝</span></span></div>
<div class="t r" style="left:816px;top:585px;width:37px;height:27px;line-height:27px;"><span style="color:#ff0000"><span class="c">贏</span></span></div>
<div class="t r" style="left:854px;top:585px;width:55px;height:27px;line-height:27px;"><span style="color:#ff0000"><span class="c">大</span></span></div>
<div class="t r" style="left:1px;top:613px;width:53px;height:27px;line-height:27px;color:#fff;"><span class="c">美职业</span></div>
<div class="t r" style="left:55px;top:613px;width:73px;height:27px;line-height:27px;">25-09-25</div>
<div class="t r" style="left:129px;top:613px;width:87px;height:27px;line-height:27px;"><span style="color:#008000;"><span class="c">纽约城</span></span></div>
<div class="t r" style="left:217px;top:613px;width:84px;height:27px;line-height:27px;"><span style="color:#ff0000">0-4</span>(0-1)</div>
<div class="t r" style="left:302px;top:613px;width:38px;height:27px;line-height:27px;">4-5</div>
<div class="t r" style="left:341px;top:613px;width:104px;height:27px;line-height:27px;"><span style="color:#000;"><span class="c">迈阿密国际</span></span></div>
<div class="t r" style="left:446px;top:613px;width:39px;height:27px;line-height:27px;">0.85</div>
<div class="t r" style="left:486px;top:613px;width:65px;height:27px;line-height:27px;"><span style="color:#000"><span class="c">平手</span></span></div>
<div class="t r" style="left:552px;top:613px;width:41px;height:27px;line-height:27px;">1.03</div>
<div class="t r" style="left:594px;top:613px;width:59px;height:27px;line-height:27px;">2.33</div>
<div class="t r" style="left:654px;top:613px;width:61px;height:27px;line-height:27px;">3.73</div>
<div class="t r" style="left:716px;top:613px;width:61px;height:27px;line-height:27px;">2.68</div>
<div class="t r" style="left:778px;top:613px;width:37px;height:27px;line-height:27px;"><span style="color:#008000"><span class="c">負</span></span></div>
<div class="t r" style="left:816px;top:613px;width:37px;height:27px;line-height:27px;"><span style="color:#008000"><span class="c">輸</span></span></div>
<div class="t r" style="left:854px;top:613px;width:55px;height:27px;line-height:27px;"><span style="color:#ff0000"><span class="c">大</span></span></div>
<div class="t r" style="left:1px;top:641px;width:53px;height:27px;line-height:27px;color:#fff;"><span class="c">美职业</span></div>
<div class="t r" style="left:55px;top:641px;width:73px;height:27px;line-height:27px;">25-09-21</div>
<div class="t r" style="left:129px;top:641px;width:87px;height:27px;line-height:27px;"><span style="color:#008000;"><span class="c">纽约城</span></span></div>
<div class="t r" style="left:217px;top:641px;width:84px;height:27px;line-height:27px;"><span style="color:#ff0000">2-0</span>(1-0)</div>
<div class="t r" style="left:302px;top:641px;width:38px;height:27px;line-height:27px;">4-3</div>
<div class="t r" style="left:341px;top:641px;width:104px;height:27px;line-height:27px;"><span style="color:#000;"><span class="c">夏洛特</span></span></div>
<div class="t r" style="left:446px;top:641px;width:39px;height:27px;line-height:27px;">0.96</div>
<div class="t r" style="left:486px;top:641px;width:65px;height:27px;line-height:27px;"><span style="color:#000"><span class="c">半</span>/<span class="c">一</span></span></div>
<div class="t r" style="left:552px;top:641px;width:41px;height:27px;line-height:27px;">0.92</div>
<div class="t r" style="left:594px;top:641px;width:59px;height:27px;line-height:27px;">1.87</div>
<div class="t r" style="left:654px;top:641px;width:61px;height:27px;line-height:27px;">3.73</div>
<div class="t r" style="left:716px;top:641px;width:61px;height:27px;line-height:27px;">3.80</div>
<div class="t r" style="left:778px;top:641px;width:37px;height:27px;line-height:27px;"><span style="color:#ff0000"><span class="c">勝</span></span></div>
<div class="t r" style="left:816px;top:641px;width:37px;height:27px;line-height:27px;"><span style="color:#ff0000"><span class="c">贏</span></span></div>
<div class="t r" style="left:854px;top:641px;width:55px;height:27px;line-height:27px;"><span style="color:#008000"><span class="c">小</span></span></div>
<div class="t r" style="left:1px;top:669px;width:53px;height:27px;line-height:27px;color:#fff;"><span class="c">美职业</span></div>
<div class="t r" style="left:55px;top:669px;width:73px;height:27px;line-height:27px;">25-09-18</div>
<div class="t r" style="left:129px;top:669px;width:87px;height:27px;line-height:27px;"><span style="color:#008000;"><span class="c">纽约城</span></span></div>
<div class="t r" style="left:217px;top:669px;width:84px;height:27px;line-height:27px;"><span style="color:#ff0000">3-2</span>(1-1)</div>
<div class="t r" style="left:302px;top:669px;width:38px;height:27px;line-height:27px;">7-3</div>
<div class="t r" style="left:341px;top:669px;width:104px;height:27px;line-height:27px;"><span style="color:#000;"><span class="c">哥伦布机员</span></span></div>
<div class="t r" style="left:446px;top:669px;width:39px;height:27px;line-height:27px;">0.96</div>
<div class="t r" style="left:486px;top:669px;width:65px;height:27px;line-height:27px;"><span style="color:#000"><span class="c">半球</span></span></div>
<div class="t r" style="left:552px;top:669px;width:41px;height:27px;line-height:27px;">0.92</div>
<div class="t r" style="left:594px;top:669px;width:59px;height:27px;line-height:27px;">2.01</div>
<div class="t r" style="left:654px;top:669px;width:61px;height:27px;line-height:27px;">3.76</div>
<div class="t r" style="left:716px;top:669px;width:61px;height:27px;line-height:27px;">3.33</div>
<div class="t r" style="left:778px;top:669px;width:37px;height:27px;line-height:27px;"><span style="color:#ff0000"><span class="c">勝</span></span></div>
<div class="t r" style="left:816px;top:669px;width:37px;height:27px;line-height:27px;"><span style="color:#ff0000"><span class="c">贏</span></span></div>
<div class="t r" style="left:854px;top:669px;width:55px;height:27px;line-height:27px;"><span style="color:#ff0000"><span class="c">大</span></span></div>
<div class="t r" style="left:1px;top:697px;width:53px;height:27px;line-height:27px;color:#fff;"><span class="c">美职业</span></div>
<div class="t r" style="left:55px;top:697px;width:73px;height:27px;line-height:27px;">25-09-14</div>
<div class="t r" style="left:129px;top:697px;width:87px;height:27px;line-height:27px;"><span style="color:#000;"><span class="c">芝加哥火焰</span></span></div>
<div class="t r" style="left:217px;top:697px;width:84px;height:27px;line-height:27px;"><span style="color:#ff0000">1-3</span>(1-1)</div>
<div class="t r" style="left:302px;top:697px;width:38px;height:27px;line-height:27px;">2-4</div>
<div class="t r" style="left:341px;top:697px;width:104px;height:27px;line-height:27px;"><span style="color:#008000;"><span class="c">纽约城</span></span></div>
<div class="t r" style="left:446px;top:697px;width:39px;height:27px;line-height:27px;">0.89</div>
<div class="t r" style="left:486px;top:697px;width:65px;height:27px;line-height:27px;"><span style="color:#000"><span class="c">平</span>/<span class="c">半</span></span></div>
<div class="t r" style="left:552px;top:697px;width:41px;height:27px;line-height:27px;">0.99</div>
<div class="t r" style="left:594px;top:697px;width:59px;height:27px;line-height:27px;">2.10</div>
<div class="t r" style="left:654px;top:697px;width:61px;height:27px;line-height:27px;">3.70</div>
<div class="t r" style="left:716px;top:697px;width:61px;height:27px;line-height:27px;">3.08</div>
<div class="t r" style="left:778px;top:697px;width:37px;height:27px;line-height:27px;"><span style="color:#ff0000"><span class="c">勝</span></span></div>
<div class="t r" style="left:816px;top:697px;width:37px;height:27px;line-height:27px;"><span style="color:#ff0000"><span class="c">贏</span></span></div>
<div class="t r" style="left:854px;top:697px;width:55px;height:27px;line-height:27px;"><span style="color:#ff0000"><span class="c">大</span></span></div>
<div class="t r" style="left:1px;top:725px;width:53px;height:27px;line-height:27px;color:#fff;"><span class="c">美职业</span></div>
<div class="t r" style="left:55px;top:725px;width:73px;height:27px;line-height:27px;">25-08-31</div>
<div class="t r" style="left:129px;top:725px;width:87px;height:27px;line-height:27px;"><span style="color:#008000;"><span class="c">纽约城</span></span></div>
<div class="t r" style="left:217px;top:725px;width:84px;height:27px;line-height:27px;"><span style="color:#ff0000">1-2</span>(1-1)</div>
<div class="t r" style="left:302px;top:725px;width:38px;height:27px;line-height:27px;">9-2</div>
<div class="t r" style="left:341px;top:725px;width:104px;height:27px;line-height:27px;"><span style="color:#000;"><span class="c">华盛顿特区联</span></span></div>
<div class="t r" style="left:446px;top:725px;width:39px;height:27px;line-height:27px;">1.04</div>
<div class="t r" style="left:486px;top:725px;width:65px;height:27px;line-height:27px;"><span style="color:#000"><span class="c">一</span>/<span class="c">球半</span></span></div>
<div class="t r" style="left:552px;top:725px;width:41px;height:27px;line-height:27px;">0.84</div>
<div class="t r" style="left:594px;top:725px;width:59px;height:27px;line-height:27px;">1.48</div>
<div class="t r" style="left:654px;top:725px;width:61px;height:27px;line-height:27px;">4.53</div>
<div class="t r" style="left:716px;top:725px;width:61px;height:27px;line-height:27px;">5.72</div>
<div class="t r" style="left:778px;top:725px;width:37px;height:27px;line-height:27px;"><span style="color:#008000"><span class="c">負</span></span></div>
<div class="t r" style="left:816px;top:725px;width:37px;height:27px;line-height:27px;"><span style="color:#008000"><span class="c">輸</span></span></div>
<div class="t r" style="left:854px;top:725px;width:55px;height:27px;line-height:27px;"><span style="color:#0000ff"><span class="c">走</span></span></div>
</body></html>
